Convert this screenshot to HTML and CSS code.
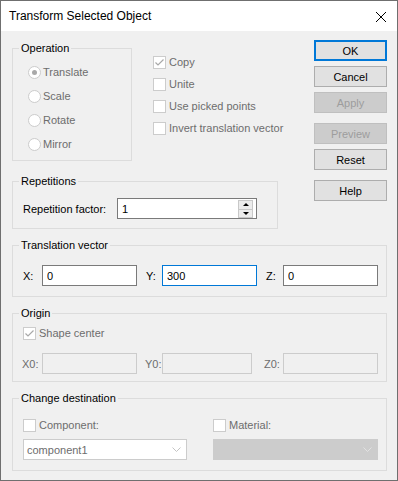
FILE: index.html
```html
<!DOCTYPE html>
<html lang="en">
  <head>
    <meta charset="UTF-8" />
    <title>Transform Selected Object</title>
    <link rel="stylesheet" href="styles.css">
  </head>
  <body>
    <div class="dialog">
      <div class="titlebar">
        <span class="title">Transform Selected Object</span>
        <svg class="close" width="12" height="12" viewBox="0 0 12 12">
          <path d="M1 1L11 11M11 1L1 11" stroke="#000" stroke-width="1" />
        </svg>
      </div>
      <div class="content">
        <div class="top">
          <div class="left">
            <div class="op-row">
              <fieldset class="group op">
                <legend>Operation</legend>
                <div class="op-body">
                  <label class="radio off"><span class="circle on"></span>Translate</label>
                  <label class="radio off"><span class="circle"></span>Scale</label>
                  <label class="radio off"><span class="circle"></span>Rotate</label>
                  <label class="radio off"><span class="circle"></span>Mirror</label>
                </div>
              </fieldset>
              <div class="checks">
                <label class="check off"><span class="box"><svg width="11" height="11" viewBox="0 0 11 11"><path d="M1.5 5.5L4 8L9.5 2.5" fill="none" stroke="#a8a8a8" stroke-width="1.2" /></svg></span>Copy</label>
                <label class="check off"><span class="box"></span>Unite</label>
                <label class="check off"><span class="box"></span>Use picked points</label>
                <label class="check off"><span class="box"></span>Invert translation vector</label>
              </div>
            </div>
            <fieldset class="group reps">
              <legend>Repetitions</legend>
              <div class="row reps-body">
                <span class="lbl rep-lbl">Repetition factor:</span>
                <div class="spinbox">
                  <span class="spin-text">1</span>
                  <span class="spinner">
                    <span class="spin-btn"><i class="up"></i></span>
                    <span class="spin-btn"><i class="down"></i></span>
                  </span>
                </div>
              </div>
            </fieldset>
          </div>
          <div class="buttons">
            <button class="btn default">OK</button>
            <button class="btn">Cancel</button>
            <button class="btn disabled">Apply</button>
            <button class="btn disabled gap">Preview</button>
            <button class="btn">Reset</button>
            <button class="btn gap">Help</button>
          </div>
        </div>

        <fieldset class="group vec">
          <legend>Translation vector</legend>
          <div class="row vec-body">
            <span class="lbl xl">X:</span>
            <input class="field" type="text" value="0" readonly />
            <span class="lbl yl">Y:</span>
            <input class="field focus" type="text" value="300" readonly />
            <span class="lbl zl">Z:</span>
            <input class="field" type="text" value="0" readonly />
          </div>
        </fieldset>

        <fieldset class="group origin">
          <legend>Origin</legend>
          <div class="origin-body">
            <label class="check off"><span class="box"><svg width="11" height="11" viewBox="0 0 11 11"><path d="M1.5 5.5L4 8L9.5 2.5" fill="none" stroke="#a8a8a8" stroke-width="1.2" /></svg></span>Shape center</label>
            <div class="row o-row">
              <span class="lbl off xl0">X0:</span>
              <input class="field dis" type="text" readonly />
              <span class="lbl off yl0">Y0:</span>
              <input class="field dis narrow" type="text" readonly />
              <span class="lbl off zl0">Z0:</span>
              <input class="field dis" type="text" readonly />
            </div>
          </div>
        </fieldset>

        <fieldset class="group dest">
          <legend>Change destination</legend>
          <div class="dest-body">
            <div class="dest-col">
              <label class="check off"><span class="box"></span>Component:</label>
              <div class="combo">
                <span class="combo-text">component1</span>
                <svg class="chev" width="9" height="5" viewBox="0 0 9 5"><path d="M0.5 0.5L4.5 4.5L8.5 0.5" fill="none" stroke="#c4c4c4" /></svg>
              </div>
            </div>
            <div class="dest-col">
              <label class="check off"><span class="box"></span>Material:</label>
              <div class="combo list">
                <span class="combo-text"></span>
                <svg class="chev" width="9" height="5" viewBox="0 0 9 5"><path d="M0.5 0.5L4.5 4.5L8.5 0.5" fill="none" stroke="#e2e2e2" /></svg>
              </div>
            </div>
          </div>
        </fieldset>
      </div>
    </div>
  </body>
</html>
```

FILE: styles.css
```css
* {
  margin: 0;
  padding: 0;
  box-sizing: border-box;
}
body {
  background: #ffffff;
  font-family: "Liberation Sans", Arial, sans-serif;
  font-size: 11px;
  color: #000;
}
.dialog {
  width: 398px;
  height: 481px;
  border: 1px solid #6f6f6f;
  background: #f0f0f0;
  display: flex;
  flex-direction: column;
}
.titlebar {
  height: 30px;
  background: #fff;
  display: flex;
  align-items: center;
  justify-content: space-between;
  padding: 0 10px 0 8px;
}
.title {
  font-size: 12px;
  color: #000;
}
.close {
  margin-top: 1px;
}
.content {
  padding: 9px 10px 0 11px;
}
.top {
  display: flex;
  justify-content: space-between;
}
.left {
  width: 301px;
}
.op-row {
  display: flex;
}

/* group boxes */
.group {
  border: 1px solid #dcdcdc;
  padding: 0;
  min-width: 0;
}
.group legend {
  margin-left: 6px;
  padding: 0 2px;
  line-height: 14px;
  color: #000;
}
.op {
  width: 120px;
  height: 120px;
  margin-top: 1px;
}
.op-body {
  padding: 5px 0 0 15px;
}
.radio {
  display: flex;
  align-items: center;
  height: 24px;
}
.off {
  color: #6d6d6d;
}
.circle {
  width: 13px;
  height: 13px;
  border: 1px solid #cccccc;
  border-radius: 50%;
  background: #fff;
  margin-right: 2px;
  display: flex;
  align-items: center;
  justify-content: center;
}
.circle.on::after {
  content: "";
  width: 5px;
  height: 5px;
  border-radius: 50%;
  background: #a9a9a9;
}
.checks {
  margin: 11px 0 0 21px;
}
.check {
  display: flex;
  align-items: center;
  height: 22px;
}
.box {
  width: 13px;
  height: 13px;
  border: 1px solid #cccccc;
  background: #fff;
  margin-right: 3px;
  display: flex;
  align-items: center;
  justify-content: center;
}
.reps {
  width: 266px;
  margin-top: 13px;
}
.row {
  display: flex;
  align-items: center;
}
.lbl {
  flex-shrink: 0;
}
.reps-body {
  padding: 10px 0 9px 10px;
}
.rep-lbl {
  width: 94px;
}
.spinbox {
  width: 140px;
  height: 21px;
  border: 1px solid #7a7a7a;
  background: #fff;
  display: flex;
  align-items: center;
  justify-content: space-between;
  padding: 0 3px 0 4px;
}
.spinner {
  display: flex;
  flex-direction: column;
  border: 1px solid #c8c8c8;
}
.spin-btn {
  width: 13px;
  height: 8px;
  background: #ececec;
  display: flex;
  align-items: center;
  justify-content: center;
}
.spin-btn + .spin-btn {
  border-top: 1px solid #c8c8c8;
}
.up {
  border-left: 3px solid transparent;
  border-right: 3px solid transparent;
  border-bottom: 3px solid #000;
}
.down {
  border-left: 3px solid transparent;
  border-right: 3px solid transparent;
  border-top: 3px solid #000;
}

/* buttons */
.buttons {
  display: flex;
  flex-direction: column;
  width: 73px;
}
.btn {
  height: 21px;
  margin-top: 5px;
  font-family: inherit;
  font-size: 11px;
  color: #000;
  background: #e1e1e1;
  border: 1px solid #adadad;
}
.btn:first-child {
  margin-top: 0;
}
.btn.gap {
  margin-top: 10px;
}
.btn.default {
  border: 2px solid #0078d7;
}
.btn.disabled {
  background: #cccccc;
  border-color: #bfbfbf;
  color: #9d9d9d;
}

/* inputs */
.field {
  flex-shrink: 0;
  width: 95px;
  height: 21px;
  border: 1px solid #7a7a7a;
  background: #fff;
  font-family: inherit;
  font-size: 11px;
  padding: 0 4px;
  outline: none;
}
.field.focus {
  border-color: #0078d7;
}
.field.dis {
  border-color: #cccccc;
  background: #f0f0f0;
}
.field.narrow {
  width: 90px;
}
.vec {
  margin-top: 9px;
}
.vec-body {
  padding: 13px 0 10px 10px;
}
.xl {
  width: 19px;
}
.yl {
  width: 16px;
  margin-left: 9px;
}
.zl {
  width: 17px;
  margin-left: 9px;
}
.origin {
  margin-top: 9px;
}
.origin-body {
  padding: 2px 0 7px 10px;
}
.o-row {
  margin-top: 9px;
  margin-left: -1px;
}
.xl0 {
  width: 20px;
}
.yl0 {
  width: 17px;
  margin-left: 8px;
}
.zl0 {
  width: 19px;
  margin-left: 12px;
}
.dest {
  margin-top: 9px;
}
.dest-body {
  display: flex;
  gap: 26px;
  padding: 9px 0 10px 10px;
}
.dest-col .combo {
  margin-top: 3px;
}
.combo {
  width: 164px;
  height: 21px;
  border: 1px solid #cccccc;
  background: #fff;
  display: flex;
  align-items: center;
  justify-content: space-between;
  padding: 0 5px 0 3px;
  color: #6d6d6d;
}
.combo.list {
  width: 165px;
  background: #cccccc;
}
```
